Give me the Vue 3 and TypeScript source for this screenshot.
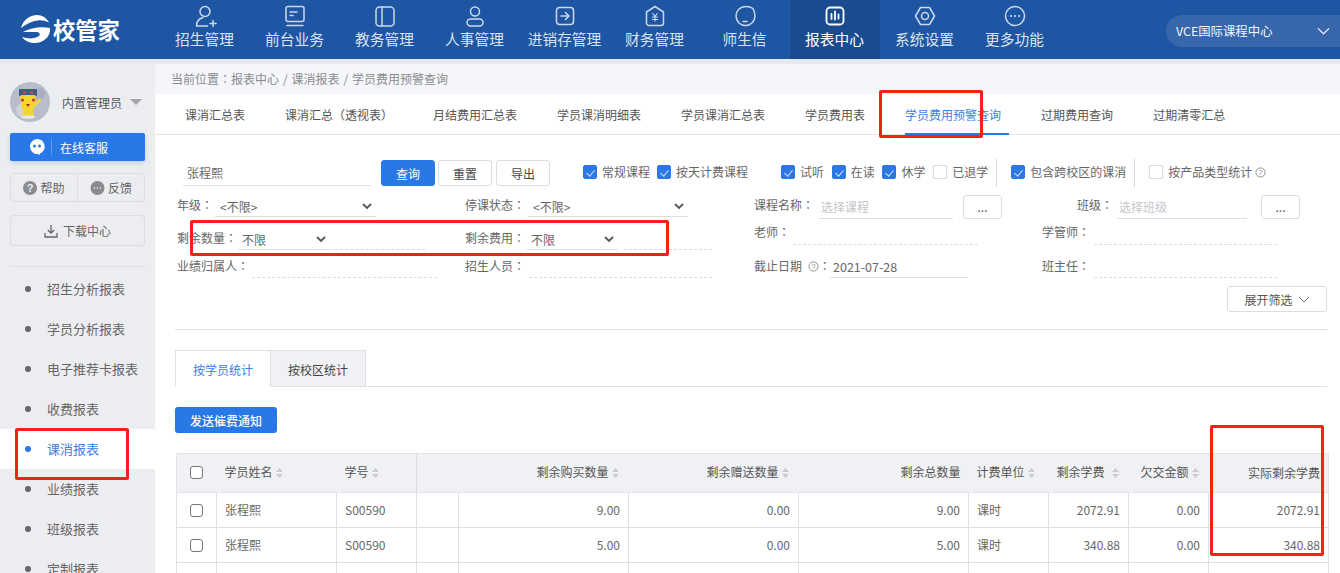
<script setup lang="ts">
const navs = [
  { t: '招生管理', i: 'user' }, { t: '前台业务', i: 'desk' }, { t: '教务管理', i: 'book' },
  { t: '人事管理', i: 'hr' }, { t: '进销存管理', i: 'stock' }, { t: '财务管理', i: 'fin' },
  { t: '师生信', i: 'msg' }, { t: '报表中心', i: 'report' }, { t: '系统设置', i: 'set' }, { t: '更多功能', i: 'more' },
]
const menus = ['招生分析报表', '学员分析报表', '电子推荐卡报表', '收费报表', '课消报表', '业绩报表', '班级报表', '定制报表']
const tabs = ['课消汇总表', '课消汇总（透视表）', '月结费用汇总表', '学员课消明细表', '学员课消汇总表', '学员费用表', '学员费用预警查询', '过期费用查询', '过期清零汇总']
const rows = [
  { q: '9.00', total: '9.00', fee: '2072.91' },
  { q: '5.00', total: '5.00', fee: '340.88' },
]
const checks1 = [{ t: '常规课程', on: true }, { t: '按天计费课程', on: true }]
const checks2 = [{ t: '试听', on: true }, { t: '在读', on: true }, { t: '休学', on: true }, { t: '已退学', on: false }]
</script>

<template>
  <div class="page">
    <header class="top">
      <div class="logo">
        <svg class="logo-mark" viewBox="0 0 31 29" width="31" height="29">
          <path d="M1 13C3 5 10 0 17 0c5 0 10 3 12 7.500C25 5.500 21 5 18 5.500 12 6 6 9 1 13z" fill="#fff" />
          <path d="M3 17C10 13 22 11 30 13c1 8-6 15-15 15-5 0-10-2-13-6 6 2 13 2 17-1 2-2 0-4-3-4-5 0-9 0-13 0z" fill="#fff" />
        </svg>
        <span class="logo-text">校管家</span>
      </div>
      <nav class="nav">
        <div v-for="n in navs" :key="n.t" class="nav-item" :class="{ on: n.i === 'report' }">
          <svg class="nav-icon" viewBox="0 0 24 24" width="24" height="24" fill="none" stroke="currentColor" stroke-width="1.5" stroke-linecap="round" stroke-linejoin="round">
            <template v-if="n.i === 'user'">
              <circle cx="12" cy="7.5" r="5" />
              <path d="M3.5 22c0-5 3-7.5 6.5-8.5M3.5 22h11M17 19.5h6M20 16.5v6" />
            </template>
            <template v-else-if="n.i === 'desk'">
              <rect x="3" y="2.5" width="18" height="15" rx="2" />
              <path d="M7 8h7M7 11.5h3M4 21.5h16" />
            </template>
            <template v-else-if="n.i === 'book'">
              <rect x="3" y="3" width="18" height="19" rx="3.5" />
              <path d="M9 3v19" />
            </template>
            <template v-else-if="n.i === 'hr'">
              <circle cx="12" cy="7.5" r="4.5" />
              <rect x="4" y="15" width="16" height="7" rx="3.5" />
            </template>
            <template v-else-if="n.i === 'stock'">
              <rect x="3.5" y="3.5" width="17" height="17" rx="3" />
              <path d="M8 12h8M12.5 8.5 16 12l-3.500 3.500" />
            </template>
            <template v-else-if="n.i === 'fin'">
              <path d="M12 2.500 20.500 8v11a2.500 2.500 0 0 1-2.500 2.500H6A2.500 2.500 0 0 1 3.500 19V8z" />
              <path d="M9.800 9.500 12 12.500l2.200-3M9.500 13h5M9.500 15.500h5M12 12.500v4.500" stroke-width="1.200" />
            </template>
            <template v-else-if="n.i === 'msg'">
              <path d="M20 4.500c-2.200-1.500-5-2-7.500-2A9.500 9.500 0 1 0 22 12c0-2.500-.6-4.500-2-7.500z" />
              <path d="M10 17.500h4" />
            </template>
            <template v-else-if="n.i === 'report'">
              <rect x="3.500" y="3.500" width="17" height="17" rx="3.500" stroke-width="1.800" />
              <path d="M8.500 10v5M12 7.500v8M15.500 10.500v4" stroke-width="1.800" />
            </template>
            <template v-else-if="n.i === 'set'">
              <path d="M7.500 3.500h9L21.500 12l-5 8.500h-9L2.500 12z" />
              <circle cx="12" cy="12" r="3.500" />
            </template>
            <template v-else>
              <circle cx="12" cy="12" r="9.500" />
              <path d="M8 12h.01M12 12h.01M16 12h.01" stroke-width="2.200" />
            </template>
          </svg>
          <span class="nav-text">{{ n.t }}</span>
        </div>
      </nav>
      <div class="campus">
        <span>VCE国际课程中心</span>
        <svg viewBox="0 0 14 8" width="13" height="8" fill="none" stroke="#dfe8f5" stroke-width="1.300"><path d="M1 1l6 6 6-6" /></svg>
      </div>
    </header>
    <div class="strip"></div>

    <div class="body">
      <aside class="side">
        <div class="me">
          <svg class="avatar" viewBox="0 0 40 40" width="40" height="40">
            <circle cx="20" cy="20" r="20" fill="#b7bdcb" />
            <circle cx="13" cy="28" r="7" fill="#cfd3dc" />
            <circle cx="29" cy="12" r="6" fill="#a8afc0" />
            <path d="M12 17h12l1 6-2 6 1 5H12l1-5-2-6z" fill="#f3d62e" />
            <rect x="9" y="7" width="18" height="7" rx="1" fill="#3f5a86" />
            <path d="M11 13h14l1 5-3 3H13l-3-3z" fill="#f3d62e" />
            <circle cx="12.500" cy="18" r="1.600" fill="#c9362c" />
            <circle cx="23.500" cy="18" r="1.600" fill="#c9362c" />
            <rect x="13" y="9.500" width="3" height="2" fill="#d24a3c" />
            <rect x="20" y="9.500" width="3" height="2" fill="#d24a3c" />
            <path d="M16 22h4l-2 3z" fill="#b2241e" />
            <path d="M24 22l6-6 1.500 2-6.500 7z" fill="#f3d62e" />
            <ellipse cx="18" cy="35" rx="7" ry="1.800" fill="#e6e8ec" />
          </svg>
          <span class="me-name">内置管理员</span>
          <i class="caret"></i>
        </div>
        <div class="service">
          <svg viewBox="0 0 16 16" width="16" height="16">
            <path d="M8 0a7.500 7.500 0 0 1 3 14.400L10.500 16 9 15A7.500 7.500 0 0 1 8 0z" fill="#fff" />
            <circle cx="5.500" cy="7" r="1.500" fill="#2878e8" />
            <circle cx="10.500" cy="7" r="1.500" fill="#2878e8" />
          </svg>
          <i class="service-line"></i>
          <span>在线客服</span>
        </div>
        <div class="help-group">
          <div class="help-cell">
            <svg viewBox="0 0 14 14" width="14" height="14"><circle cx="7" cy="7" r="7" fill="#8b8c92" /><text x="7" y="11" text-anchor="middle" font-size="11" font-weight="700" fill="#ecedf1" font-family="Liberation Sans, sans-serif">?</text></svg>
            <span>帮助</span>
          </div>
          <div class="help-cell">
            <svg viewBox="0 0 15 14" width="15" height="14"><circle cx="7.500" cy="7" r="7" fill="#8b8c92" /><path d="M4.500 7h.01M7.500 7h.01M10.500 7h.01" stroke="#ecedf1" stroke-width="1.600" stroke-linecap="round" /></svg>
            <span>反馈</span>
          </div>
        </div>
        <div class="download">
          <svg viewBox="0 0 14 14" width="14" height="14" fill="none" stroke="#666" stroke-width="1.300"><path d="M7 1v8M3.800 6 7 9.200 10.200 6M1 9v4h12V9" /></svg>
          <span>下载中心</span>
        </div>
        <div class="side-line"></div>
        <ul class="menu">
          <li v-for="m in menus" :key="m" :class="{ on: m === '课消报表' }"><i></i>{{ m }}</li>
        </ul>
      </aside>

      <main class="main">
        <div class="crumb">当前位置<span class="cn">：</span>报表中心 / 课消报表 / 学员费用预警查询</div>
        <div class="tabs">
          <span v-for="t in tabs" :key="t" class="tab" :class="{ on: t === '学员费用预警查询' }">{{ t }}</span>
        </div>

        <section class="content">
          <div class="search-row">
            <div class="name-input">张程熙</div>
            <button class="btn primary">查询</button>
            <button class="btn">重置</button>
            <button class="btn last">导出</button>
            <div class="checks checks-a">
              <label v-for="c in checks1" :key="c.t" class="check"><i class="box" :class="{ on: c.on }"></i>{{ c.t }}</label>
            </div>
            <div class="checks checks-b">
              <label v-for="c in checks2" :key="c.t" class="check"><i class="box" :class="{ on: c.on }"></i>{{ c.t }}</label>
            </div>
            <i class="vsep"></i>
            <label class="check"><i class="box on"></i>包含跨校区的课消</label>
            <i class="vsep"></i>
            <label class="check"><i class="box"></i>按产品类型统计
              <svg class="q" viewBox="0 0 12 12" width="11" height="11"><circle cx="6" cy="6" r="5" fill="none" stroke="#888" /><text x="6" y="9" text-anchor="middle" font-size="8" fill="#888" font-family="Liberation Sans, sans-serif">?</text></svg>
            </label>
          </div>

          <div class="filters">
            <div class="field r1"><span class="lb w38">年级<span class="cn">：</span></span><div class="sel w161">&lt;不限&gt;<svg class="chev" viewBox="0 0 10 6" width="10" height="6"><path d="M1 1l4 4 4-4" fill="none" stroke="#555" stroke-width="1.800" /></svg></div></div>
            <div class="field r1"><span class="lb w63">停课状态<span class="cn">：</span></span><div class="sel w160">&lt;不限&gt;<svg class="chev" viewBox="0 0 10 6" width="10" height="6"><path d="M1 1l4 4 4-4" fill="none" stroke="#555" stroke-width="1.800" /></svg></div></div>
            <div class="field t"><span class="lb w65">课程名称<span class="cn">：</span></span><div class="inp w134 ph">选择课程</div><button class="more">...</button></div>
            <div class="field t pl35"><span class="lb w40">班级<span class="cn">：</span></span><div class="inp w130 ph">选择班级</div><button class="more ml14">...</button></div>

            <div class="field b"><span class="lb w61">剩余数量<span class="cn">：</span></span><div class="sel w92 big">不限<svg class="chev" viewBox="0 0 10 6" width="10" height="6"><path d="M1 1l4 4 4-4" fill="none" stroke="#555" stroke-width="1.800" /></svg></div><i class="dash w90 ml5"></i></div>
            <div class="field b"><span class="lb w62">剩余费用<span class="cn">：</span></span><div class="sel w91 big">不限<svg class="chev" viewBox="0 0 10 6" width="10" height="6"><path d="M1 1l4 4 4-4" fill="none" stroke="#555" stroke-width="1.800" /></svg></div><i class="dash w88 ml6"></i></div>
            <div class="field m"><span class="lb w39">老师<span class="cn">：</span></span><i class="dash w185"></i></div>
            <div class="field m"><span class="lb w52">学管师<span class="cn">：</span></span><i class="dash w183"></i></div>

            <div class="field c"><span class="lb w75">业绩归属人<span class="cn">：</span></span><i class="dash w185"></i></div>
            <div class="field c"><span class="lb w64">招生人员<span class="cn">：</span></span><i class="dash w183"></i></div>
            <div class="field c">
              <span class="lb w76">截止日期 <svg class="q" viewBox="0 0 12 12" width="11" height="11"><circle cx="6" cy="6" r="5" fill="none" stroke="#888" /><text x="6" y="9" text-anchor="middle" font-size="8" fill="#888" font-family="Liberation Sans, sans-serif">?</text></svg><span class="cn">：</span></span>
              <div class="inp w138 date">2021-07-28</div>
            </div>
            <div class="field c"><span class="lb w52">班主任<span class="cn">：</span></span><i class="dash w183"></i></div>
          </div>

          <div class="expand-row">
            <button class="expand">展开筛选
              <svg viewBox="0 0 12 7" width="12" height="7"><path d="M1 1l5 5 5-5" fill="none" stroke="#777" stroke-width="1" /></svg>
            </button>
          </div>
          <div class="hr"></div>

          <div class="subtabs">
            <span class="sub on">按学员统计</span>
            <span class="sub">按校区统计</span>
          </div>
          <button class="notify">发送催费通知</button>

          <table class="grid">
            <colgroup>
              <col style="width:40px" /><col style="width:120px" /><col style="width:80px" /><col style="width:42px" />
              <col style="width:170px" /><col style="width:170px" /><col style="width:170px" /><col style="width:80px" />
              <col style="width:80px" /><col style="width:80px" /><col style="width:120px" />
            </colgroup>
            <thead>
              <tr>
                <th class="ck"><i class="tbox"></i></th>
                <th>学员姓名<svg class="sort" viewBox="0 0 7 10" width="7" height="10"><path d="M3.500 0 7 4H0zM0 6h7l-3.500 4z" fill="#c9cbd1" /></svg></th>
                <th>学号<svg class="sort" viewBox="0 0 7 10" width="7" height="10"><path d="M3.500 0 7 4H0zM0 6h7l-3.500 4z" fill="#c9cbd1" /></svg></th>
                <th colspan="2" class="rt s fix">剩余购买数量<svg class="sort" viewBox="0 0 7 10" width="7" height="10"><path d="M3.500 0 7 4H0zM0 6h7l-3.500 4z" fill="#c9cbd1" /></svg></th>
                <th class="rt s">剩余赠送数量<svg class="sort" viewBox="0 0 7 10" width="7" height="10"><path d="M3.500 0 7 4H0zM0 6h7l-3.500 4z" fill="#c9cbd1" /></svg></th>
                <th class="rt">剩余总数量</th>
                <th>计费单位<svg class="sort" viewBox="0 0 7 10" width="7" height="10"><path d="M3.500 0 7 4H0zM0 6h7l-3.500 4z" fill="#c9cbd1" /></svg></th>
                <th class="rt s">剩余学费<svg class="sort wide" viewBox="0 0 7 10" width="7" height="10"><path d="M3.500 0 7 4H0zM0 6h7l-3.500 4z" fill="#c9cbd1" /></svg></th>
                <th class="rt s">欠交金额<svg class="sort" viewBox="0 0 7 10" width="7" height="10"><path d="M3.500 0 7 4H0zM0 6h7l-3.500 4z" fill="#c9cbd1" /></svg></th>
                <th class="rt">实际剩余学费</th>
              </tr>
            </thead>
            <tbody>
              <tr v-for="r in rows" :key="r.fee">
                <td class="ck"><i class="tbox"></i></td>
                <td>张程熙</td><td>S00590</td><td></td>
                <td class="num">{{ r.q }}</td><td class="num">0.00</td><td class="num">{{ r.total }}</td>
                <td>课时</td><td class="num">{{ r.fee }}</td><td class="num">0.00</td><td class="num">{{ r.fee }}</td>
              </tr>
              <tr class="blank"><td></td><td></td><td></td><td></td><td></td><td></td><td></td><td></td><td></td><td></td><td></td></tr>
            </tbody>
          </table>
        </section>
      </main>
    </div>

    <i class="mark mark-tab"></i>
    <i class="mark mark-filter"></i>
    <i class="mark mark-side"></i>
    <i class="mark mark-col"></i>
  </div>
</template>

<style>
html, body { margin: 0; overflow: hidden; }
</style>

<style scoped>
* { box-sizing: border-box; }
.page {
  position: relative; width: 1340px; height: 573px; overflow: hidden; background: #fff; color: #555;
  font-family: "Noto Sans CJK SC", "Noto Sans", sans-serif; font-size: 12px;
}
i { font-style: normal; display: block; }
button { font-family: inherit; }
.cn { font-family: "Noto Sans CJK TC", sans-serif; }

.top { height: 59px; background: #1f56a3; display: flex; color: #fff; }
.logo { width: 160px; display: flex; align-items: center; padding-left: 20px; flex: none; }
.logo-mark { flex: none; }
.logo-text { font-size: 22.300px; font-weight: 700; line-height: 1; margin-left: 2px; }
.nav { display: flex; flex: none; margin-left: -0.500px; }
.nav-item { width: 90px; display: flex; flex-direction: column; align-items: center; color: #cbd8ea; padding-top: 4px; }
.nav-item.on { background: #1b4b8f; color: #fff; }
.nav-text { font-size: 14.700px; line-height: 20px; margin-top: 1px; color: #d9e3f1; white-space: nowrap; }
.nav-item.on .nav-text { color: #fff; }
.campus {
  margin: 15px 0 0 106.500px; width: 174px; height: 32px; background: #3766ab; border-radius: 16px 0 0 16px;
  display: flex; align-items: center; justify-content: space-between; padding: 0 10px 0 10px; font-size: 12.400px; color: #f2f5fa;
}
.strip { height: 5px; background: #e4e9ef; }

.body { display: flex; height: 509px; }
.side { width: 155px; flex: none; background: #ecedf1; padding: 18px 10px 0; position: relative; }
.me { display: flex; align-items: center; height: 40px; }
.me-name { margin-left: 12px; color: #555; }
.caret { margin-left: 8px; width: 0; height: 0; border: 6px solid transparent; border-top: 6px solid #a3a4a9; border-bottom: 0; }
.service {
  margin-top: 11px; height: 28px; background: #2878e8; border-radius: 2px; color: #fff; display: flex; align-items: center;
  padding-left: 19px; box-shadow: 0 2px 5px rgba(40, 120, 232, .25);
}
.service-line { width: 1px; height: 16px; background: rgba(255, 255, 255, .25); margin: 0 8px 0 6px; }
.help-group { margin-top: 12px; height: 29px; border: 1px solid #dcdde3; border-radius: 4px; display: flex; }
.help-cell { flex: 1; display: flex; align-items: center; justify-content: center; gap: 3px; color: #666; }
.help-cell + .help-cell { border-left: 1px solid #dcdde3; }
.download { margin-top: 13px; height: 31px; border: 1px solid #dcdde3; border-radius: 4px; display: flex; align-items: center; justify-content: center; gap: 5px; color: #666; }
.side-line { margin-top: 20px; height: 1px; background: #dfe0e6; }
.menu { list-style: none; margin: 2px -10px 0; padding: 0; }
.menu li { height: 40px; display: flex; align-items: center; padding: 0 0 1px 25px; font-size: 13px; color: #666; white-space: nowrap; }
.menu li i { width: 6px; height: 6px; border-radius: 50%; background: #666; margin: 1px 16px 0 0; }
.menu li.on { background: #fff; color: #3a80e8; }
.menu li.on i { background: #2878e8; }

.main { flex: 1; min-width: 0; }
.crumb { height: 30px; background: #f5f6fa; line-height: 30px; padding-left: 16px; color: #8a8b90; word-spacing: 1.200px; }
.tabs { height: 41px; display: flex; padding-left: 10px; border-bottom: 1px solid #e3e4e9; }
.tab { padding: 0 20px; line-height: 41px; color: #555; white-space: nowrap; position: relative; }
.tab.on { color: #3a80e8; }
.tab.on::after { content: ""; position: absolute; left: 20px; width: 104px; bottom: -1px; height: 2px; background: #2878e8; }

.content { padding: 0 13px 0 20px; }
.search-row { display: flex; align-items: center; height: 26px; margin-top: 25px; padding-left: 8px; }
.name-input { width: 188px; height: 25px; line-height: 23px; padding-left: 4px; border-bottom: 1px solid #dfe0e6; color: #666; margin-right: 10px; }
.btn { width: 54px; height: 26px; border: 1px solid #dcdde3; border-radius: 3px; background: #fff; color: #444; font-size: 12px; padding: 0; margin-right: 3px; }
.btn + .btn { margin-right: 4px; }
.btn.last { margin-right: 0; }
.btn.primary { background: #2878e8; border-color: #2878e8; color: #fff; }
.checks { display: flex; gap: 7px; }
.checks-a { margin-left: 33px; }
.checks-b { margin-left: 33px; gap: 7.700px; }
.check { display: flex; align-items: center; color: #666; white-space: nowrap; line-height: 16px; margin-top: -2px; }
.box { width: 14px; height: 14px; border: 1px solid #dcdde3; border-radius: 2px; margin-right: 5px; background: #fff; position: relative; flex: none; }
.box.on { background: #2b78e4; border-color: #2b78e4; }
.box.on::after { content: ""; position: absolute; left: 4px; top: 2px; width: 4px; height: 7px; border: solid #cfe0fa; border-width: 0 1.300px 1.300px 0; transform: rotate(40deg); }
.vsep { width: 1px; height: 28px; background: #d5d6da; margin: 0 14px 0 8px; }
.q { margin-left: 3px; vertical-align: -1px; }

.filters { margin: 9px 0 0 2px; display: grid; grid-template-columns: 288px 289px 288px 286px; grid-template-rows: 24px 27px 22px; row-gap: 4px; }
.filters .field:nth-child(n+9) { margin-top: 2px; }
.field { display: flex; height: 22px; align-items: flex-start; }
.field.t { height: 24px; }
.field.b { align-self: end; margin-top: 2px; }
.field.m { height: 23px; align-self: start; margin-top: -1px; }
.lb { flex: none; line-height: 20px; color: #666; white-space: nowrap; }
.w38 { width: 38px; } .w63 { width: 63px; } .w65 { width: 65px; } .w40 { width: 40px; } .w61 { width: 61px; } .w62 { width: 62px; }
.w39 { width: 39px; } .w52 { width: 52px; } .w75 { width: 75px; } .w64 { width: 64px; } .w76 { width: 76px; }
.pl35 { padding-left: 35px; }
.sel, .inp { position: relative; height: 100%; border-bottom: 1px solid #dfe0e6; line-height: 24px; color: #666; padding-left: 4px; flex: none; }
.sel { padding-left: 5px; font-size: 12px; white-space: nowrap; }
.sel.big { font-size: 12px; padding-left: 4px; }
.chev { position: absolute; right: 4px; top: 8px; }
.w161 { width: 161px; } .w160 { width: 160px; } .w134 { width: 134px; } .w130 { width: 130px; } .w92 { width: 92px; } .w91 { width: 91px; } .w138 { width: 138px; }
.ph { color: #c4c5ca; padding-left: 2px; }
.date { font-size: 12.500px; padding-left: 3px; line-height: 22px; }
.more { width: 39px; height: 24px; margin-left: 10px; border: 1px solid #dcdde3; border-radius: 3px; background: #fff; color: #555; font-size: 12px; line-height: 18px; padding: 0; flex: none; }
.ml14 { margin-left: 14px; }
.dash { height: 100%; border-bottom: 1px dashed #dcdde3; flex: none; }
.w90 { width: 90px; } .w88 { width: 88px; } .w185 { width: 185px; } .w183 { width: 183px; }
.ml5 { margin-left: 5px; } .ml6 { margin-left: 6px; }

.expand-row { display: flex; justify-content: flex-end; margin-top: 10px; }
.expand { width: 100px; height: 26px; border: 1px solid #dcdde3; border-radius: 3px; background: #fff; color: #555; font-size: 12px; padding: 0; display: flex; align-items: center; justify-content: center; gap: 5px; }
.hr { margin-top: 17px; height: 1px; background: #dfe0e4; }
.subtabs { margin-top: 20px; height: 37px; display: flex; border-bottom: 1px solid #e0e1e6; }
.sub { width: 95px; height: 37px; line-height: 38px; text-align: center; background: #f0f1f5; border: 1px solid #e0e1e6; border-left: 0; border-bottom: 1px solid #e0e1e6; color: #444; }
.sub.on { width: 96px; background: #fff; border-left: 1px solid #e0e1e6; border-bottom-color: #fff; color: #3a80e8; }
.notify { display: block; margin-top: 20px; width: 102px; height: 26px; background: #2878e8; border: 0; border-radius: 3px; color: #fff; font-size: 12px; font-weight: 500; padding: 0; }

.grid { margin: 20px 0 0 1px; width: 1152px; table-layout: fixed; border-collapse: collapse; color: #666; }
.grid th { height: 39px; background: #f0f1f5; border-top: 1px solid #e3e4e9; border-bottom: 1px solid #e3e4e9; font-weight: 400; color: #555; text-align: left; padding: 0 8px 4px; white-space: nowrap; }
.grid th:first-child { border-left: 1px solid #e3e4e9; }
.grid th:last-child { border-right: 1px solid #e3e4e9; padding-bottom: 2px; }
.grid th.rt { text-align: right; }
.grid th.s { padding-right: 10px; }
.grid th.fix { border-left: 1px solid #dcdde2; }
.grid td { height: 35px; border: 1px solid #dfe0e4; padding: 0 8px 2px; white-space: nowrap; }
.grid .num { text-align: right; }
.grid th.ck { padding: 0 0 2px 13px; }
.grid td.ck { padding: 0 0 0 13px; }
.tbox { width: 13px; height: 13px; border: 1px solid #777; border-radius: 3px; background: #fff; }
.sort { margin-left: 3px; vertical-align: -1px; }
.sort.wide { margin-left: 7px; }

.mark { position: absolute; border: 3px solid #fa1e14; border-radius: 2px; pointer-events: none; }
.mark-tab { left: 879px; top: 90px; width: 104px; height: 48px; }
.mark-filter { left: 190px; top: 220px; width: 479px; height: 36px; }
.mark-side { left: 15px; top: 428px; width: 114px; height: 52px; }
.mark-col { left: 1210px; top: 425px; width: 114px; height: 131px; }
</style>
